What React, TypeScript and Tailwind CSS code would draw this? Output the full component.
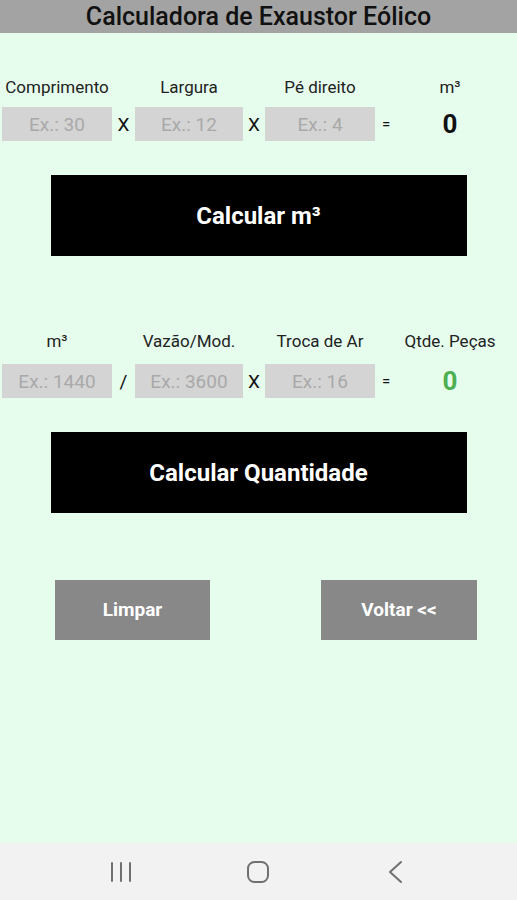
import React from "react";

const font = { fontFamily: "Roboto, 'Noto Sans', sans-serif" };

function Field({ placeholder }: { placeholder: string }) {
  return (
    <input
      placeholder={placeholder}
      className="h-[34px] w-full bg-[#d4d4d4] text-center text-[19px] text-[#222] placeholder:text-[#a9a9a9] outline-none"
    />
  );
}

function Row({
  labels,
  placeholders,
  ops,
  result,
  resultColor,
  gap,
}: {
  labels: string[];
  placeholders: string[];
  ops: string[];
  result: string;
  resultColor: string;
  gap: string;
}) {
  const cols = "grid grid-cols-[110px_23px_108px_22px_110px_22px_1fr] pl-[2px] pr-[14px]";
  return (
    <div>
      <div className={`${cols} h-[20px] items-center text-[17px] text-[#222]`}>
        <div className="text-center whitespace-nowrap">{labels[0]}</div>
        <div />
        <div className="text-center whitespace-nowrap">{labels[1]}</div>
        <div />
        <div className="text-center whitespace-nowrap">{labels[2]}</div>
        <div />
        <div className="text-center whitespace-nowrap">{labels[3]}</div>
      </div>
      <div className={`${cols} ${gap} h-[34px] items-center`}>
        <Field placeholder={placeholders[0]} />
        <div className="text-center text-[19px] leading-none text-[#111]">{ops[0]}</div>
        <Field placeholder={placeholders[1]} />
        <div className="text-center text-[19px] leading-none text-[#111]">{ops[1]}</div>
        <Field placeholder={placeholders[2]} />
        <div className="text-center text-[15px] leading-none text-[#111]">=</div>
        <div className={`text-center text-[26px] font-bold leading-none ${resultColor}`}>{result}</div>
      </div>
    </div>
  );
}

export default function App() {
  return (
    <div style={font} className="flex h-[900px] w-[517px] flex-col bg-[#e6fdee]">
      <div className="flex h-[33px] items-center justify-center bg-[#a3a3a3] text-[25px] font-medium text-[#111]">
        Calculadora de Exaustor Eólico
      </div>

      <div className="mt-[42px]">
        <Row
          labels={["Comprimento", "Largura", "Pé direito", "m³"]}
          placeholders={["Ex.: 30", "Ex.: 12", "Ex.: 4"]}
          ops={["X", "X"]}
          result="0"
          resultColor="text-[#111]"
          gap="mt-[12px]"
        />
      </div>

      <button className="mx-auto mt-[34px] flex h-[81px] w-[416px] items-center justify-center bg-black text-[24px] font-bold text-white">
        Calcular m³
      </button>

      <div className="mt-[73px]">
        <Row
          labels={["m³", "Vazão/Mod.", "Troca de Ar", "Qtde. Peças"]}
          placeholders={["Ex.: 1440", "Ex.: 3600", "Ex.: 16"]}
          ops={["/", "X"]}
          result="0"
          resultColor="text-[#4caf50]"
          gap="mt-[15px]"
        />
      </div>

      <button className="mx-auto mt-[34px] flex h-[81px] w-[416px] items-center justify-center bg-black text-[24px] font-bold text-white">
        Calcular Quantidade
      </button>

      <div className="mt-[67px] flex justify-between pl-[55px] pr-[40px]">
        <button className="h-[60px] w-[155px] bg-[#888888] text-[19px] font-bold text-white">Limpar</button>
        <button className="h-[60px] w-[156px] bg-[#888888] text-[19px] font-bold text-white">Voltar &lt;&lt;</button>
      </div>

      <div className="mt-auto flex h-[57px] items-center justify-around bg-[#f2f2f2] px-[52px]">
        <svg width="28" height="28" viewBox="0 0 28 28" fill="none" stroke="#707070" strokeWidth="2" strokeLinecap="round">
          <path d="M5 5v18M14 5v18M23 5v18" />
        </svg>
        <svg width="28" height="28" viewBox="0 0 28 28" fill="none" stroke="#707070" strokeWidth="2">
          <rect x="4" y="4" width="20" height="20" rx="6.5" />
        </svg>
        <svg width="28" height="28" viewBox="0 0 28 28" fill="none" stroke="#707070" strokeWidth="2" strokeLinecap="round" strokeLinejoin="round">
          <path d="M19 4L8 14l11 10" />
        </svg>
      </div>
    </div>
  );
}
